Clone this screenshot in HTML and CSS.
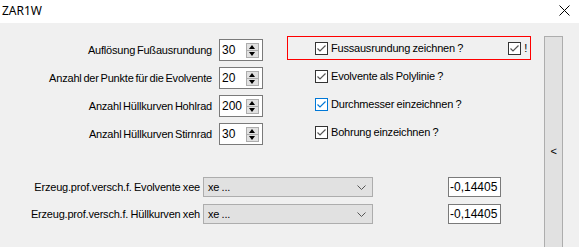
FILE: index.html
```html
<!DOCTYPE html>
<html lang="de">
<head>
    <meta charset="UTF-8">
    <title>ZAR1W</title>
    <link rel="stylesheet" href="styles.css">
</head>
<body>
    <div class="titlebar">
        <span class="title">ZAR1W</span>
        <svg class="close" width="11" height="11" viewBox="0 0 11 11"><path d="M0.5 0.5 L10.5 10.5 M10.5 0.5 L0.5 10.5" stroke="#000" stroke-width="1"/></svg>
    </div>
    <div class="client">
        <div class="content">
            <div class="top">
                <div class="spins">
                    <label>Auflösung Fußausrundung</label>
                    <div class="spin"><span>30</span><div class="spin-btns"><span class="up"></span><span class="down"></span></div></div>
                    <label>Anzahl der Punkte für die Evolvente</label>
                    <div class="spin"><span>20</span><div class="spin-btns"><span class="up"></span><span class="down"></span></div></div>
                    <label>Anzahl Hüllkurven Hohlrad</label>
                    <div class="spin"><span>200</span><div class="spin-btns"><span class="up"></span><span class="down"></span></div></div>
                    <label>Anzahl Hüllkurven Stirnrad</label>
                    <div class="spin"><span>30</span><div class="spin-btns"><span class="up"></span><span class="down"></span></div></div>
                </div>
                <div class="checks">
                    <div class="check-row highlight">
                        <svg class="cb" width="13" height="13" viewBox="0 0 13 13"><rect x="0.5" y="0.5" width="12" height="12" fill="#fff" stroke="#333"/><path d="M2.5 6.5 L5 9 L10.5 3.5" fill="none" stroke="#555" stroke-width="1.2"/></svg>
                        <span>Fussausrundung zeichnen ?</span>
                        <span class="extra">
                            <svg class="cb" width="13" height="13" viewBox="0 0 13 13"><rect x="0.5" y="0.5" width="12" height="12" fill="#fff" stroke="#333"/><path d="M2.5 6.5 L5 9 L10.5 3.5" fill="none" stroke="#555" stroke-width="1.2"/></svg>
                            <span>!</span>
                        </span>
                    </div>
                    <div class="check-row">
                        <svg class="cb" width="13" height="13" viewBox="0 0 13 13"><rect x="0.5" y="0.5" width="12" height="12" fill="#fff" stroke="#333"/><path d="M2.5 6.5 L5 9 L10.5 3.5" fill="none" stroke="#555" stroke-width="1.2"/></svg>
                        <span>Evolvente als Polylinie ?</span>
                    </div>
                    <div class="check-row">
                        <svg class="cb" width="13" height="13" viewBox="0 0 13 13"><rect x="0.5" y="0.5" width="12" height="12" fill="#fff" stroke="#0078d7"/><path d="M2.5 6.5 L5 9 L10.5 3.5" fill="none" stroke="#0078d7" stroke-width="1.2"/></svg>
                        <span>Durchmesser einzeichnen ?</span>
                    </div>
                    <div class="check-row">
                        <svg class="cb" width="13" height="13" viewBox="0 0 13 13"><rect x="0.5" y="0.5" width="12" height="12" fill="#fff" stroke="#333"/><path d="M2.5 6.5 L5 9 L10.5 3.5" fill="none" stroke="#555" stroke-width="1.2"/></svg>
                        <span>Bohrung einzeichnen ?</span>
                    </div>
                </div>
            </div>
            <div class="combos">
                <div class="combo-row">
                    <label>Erzeug.prof.versch.f. Evolvente xee</label>
                    <div class="combo"><span>xe ...</span><svg width="9" height="5" viewBox="0 0 9 5"><path d="M0.5 0.5 L4.5 4.5 L8.5 0.5" fill="none" stroke="#555"/></svg></div>
                    <div class="value">-0,14405</div>
                </div>
                <div class="combo-row">
                    <label>Erzeug.prof.versch.f. Hüllkurven xeh</label>
                    <div class="combo"><span>xe ...</span><svg width="9" height="5" viewBox="0 0 9 5"><path d="M0.5 0.5 L4.5 4.5 L8.5 0.5" fill="none" stroke="#555"/></svg></div>
                    <div class="value">-0,14405</div>
                </div>
            </div>
        </div>
        <div class="strip"><span>&lt;</span></div>
    </div>
</body>
</html>
```

FILE: styles.css
```css
body {
    margin: 0;
    width: 579px;
    height: 247px;
    overflow: hidden;
    background: #f0f0f0;
    font-family: "Liberation Sans", Arial, sans-serif;
    font-size: 11px;
    letter-spacing: -0.2px;
    word-spacing: -0.5px;
    color: #000;
}
.titlebar {
    height: 23px;
    background: #fff;
    display: flex;
    align-items: center;
    justify-content: space-between;
    padding: 0 9px 0 2px;
}
.title {
    font-family: "Noto Sans", sans-serif;
    font-size: 12px;
    letter-spacing: 0;
    margin-top: -3px;
}
.close {
    margin-top: -3px;
}
.client {
    display: flex;
    height: 224px;
}
.content {
    width: 544px;
    display: flex;
    flex-direction: column;
}
.top {
    display: flex;
    align-items: flex-start;
}
.spins {
    margin-top: 16px;
    display: grid;
    grid-template-columns: 212px 44px;
    grid-auto-rows: 22px;
    column-gap: 7px;
    row-gap: 6px;
    align-items: center;
}
.spins label {
    text-align: right;
    white-space: nowrap;
    word-spacing: -1px;
}
.spin {
    height: 22px;
    box-sizing: border-box;
    background: #fff;
    border: 1px solid #7a7a7a;
    display: flex;
    align-items: center;
    justify-content: space-between;
    padding: 0 3px 0 2px;
    font-size: 12px;
    letter-spacing: 0;
}
.spin-btns {
    display: flex;
    flex-direction: column;
    width: 13px;
}
.spin-btns span {
    background: #e1e1e1;
    border: 1px solid #adadad;
    box-sizing: border-box;
    height: 8px;
    position: relative;
}
.spin-btns .down {
    margin-top: -1px;
}
.spin-btns .up::after,
.spin-btns .down::after {
    content: "";
    position: absolute;
    left: 2px;
    border-left: 3.5px solid transparent;
    border-right: 3.5px solid transparent;
}
.spin-btns .up::after {
    top: 1px;
    border-bottom: 4px solid #000;
}
.spin-btns .down::after {
    top: 1px;
    border-top: 4px solid #000;
}
.checks {
    margin-top: 13px;
    margin-left: 24px;
    width: 244px;
    display: flex;
    flex-direction: column;
    gap: 4px;
}
.check-row {
    height: 24px;
    box-sizing: border-box;
    display: flex;
    align-items: center;
    padding-left: 28px;
    gap: 3px;
}
.check-row.highlight {
    border: 1px solid #f00;
    padding-left: 27px;
    padding-right: 3px;
}
.extra {
    margin-left: auto;
    display: flex;
    align-items: center;
    gap: 3px;
}
.combos {
    margin-top: 32px;
    display: flex;
    flex-direction: column;
    gap: 7px;
}
.combo-row {
    display: flex;
    align-items: center;
}
.combo-row label {
    width: 200px;
    text-align: right;
    white-space: nowrap;
}
.combo {
    margin-left: 3px;
    width: 170px;
    height: 20px;
    box-sizing: border-box;
    background: #e1e1e1;
    border: 1px solid #adadad;
    display: flex;
    align-items: center;
    justify-content: space-between;
    padding: 0 6px 0 4px;
}
.value {
    margin-left: 75px;
    width: 53px;
    height: 20px;
    box-sizing: border-box;
    background: #fff;
    border: 1px solid #7a7a7a;
    display: flex;
    align-items: center;
    padding-left: 1px;
    font-size: 12px;
    letter-spacing: 0;
}
.strip {
    margin-top: 13px;
    width: 19px;
    box-sizing: border-box;
    background: #e1e1e1;
    border: 1px solid #adadad;
    border-bottom: none;
    display: flex;
    align-items: center;
    justify-content: center;
    padding-top: 18px;
    font-size: 11px;
}
```
